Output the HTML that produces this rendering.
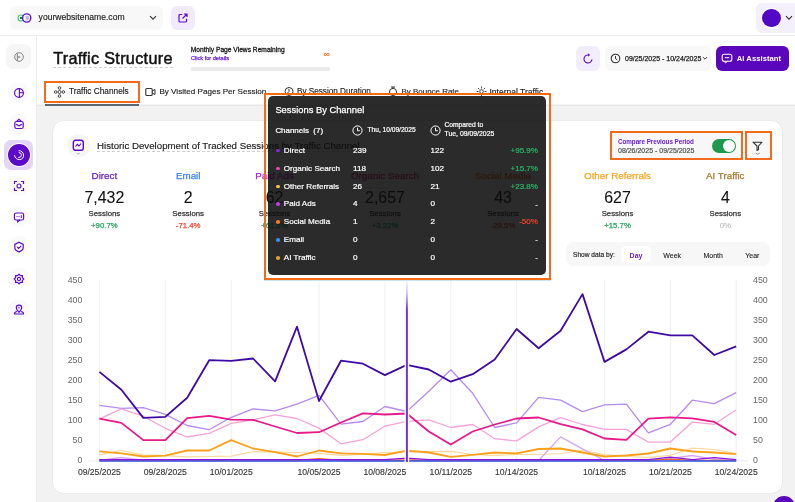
<!DOCTYPE html>
<html><head><meta charset="utf-8">
<style>
*{box-sizing:border-box;margin:0;padding:0}
html,body{width:795px;height:502px;overflow:hidden;background:#fff;font-family:"Liberation Sans",sans-serif;color:#111}
.a{position:absolute}
.nw{white-space:nowrap}
</style></head><body><div id="root" style="position:absolute;left:0;top:0;width:795px;height:502px;overflow:hidden;will-change:transform">
<div class="a" style="left:0;top:0;width:795px;height:36px;background:#fff;border-bottom:1px solid #ececec"></div>
<div class="a" style="left:10px;top:6px;width:153px;height:24px;border-radius:6px;background:#f8f8f8"></div>
<svg class="a" style="left:12px;top:8px" width="30" height="20" viewBox="12 8 30 20">
<circle cx="21" cy="18" r="3" fill="#fff" stroke="#3cc47a" stroke-width="1.1"/>
<circle cx="21" cy="18" r="1.2" fill="#0b8a3c"/>
<circle cx="26.7" cy="18" r="4.1" fill="#fff" stroke="#5f12c8" stroke-width="1.4"/>
<path d="M25.8 15.6 H26.8 A2.4 2.4 0 0 1 26.8 20.4 H25.8Z" fill="#c9b0f0"/>
</svg>
<div class="a nw" style="left:38.6px;top:12.7px;font-size:8.6px;line-height:8.6px;color:#222;font-weight:400;;-webkit-text-stroke:0.15px #222">yourwebsitename.com</div>
<svg class="a" style="left:149px;top:15px" width="8" height="6" viewBox="0 0 8 6"><path d="M1 1.2 L4 4.2 L7 1.2" fill="none" stroke="#333" stroke-width="1.1"/></svg>
<div class="a" style="left:171px;top:6px;width:24px;height:24px;border-radius:6px;background:#f1eafc"></div>
<svg class="a" style="left:178px;top:13px" width="10" height="10" viewBox="0 0 10 10"><path d="M4.2 1.5 H2 A1 1 0 0 0 1 2.5 V8 A1 1 0 0 0 2 9 H7.5 A1 1 0 0 0 8.5 8 V5.8" fill="none" stroke="#5b0bc9" stroke-width="1.2"/><path d="M4.5 5.5 L9 1 M6 1 H9 V4" fill="none" stroke="#5b0bc9" stroke-width="1.2"/></svg>
<div class="a" style="left:756px;top:3px;width:39px;height:30px;border-radius:6px 0 0 6px;background:#f3effb"></div>
<div class="a" style="left:762px;top:8.7px;width:18.6px;height:18.6px;border-radius:50%;background:#5208c4;box-shadow:0 0 0 1.3px #fff"></div>
<svg class="a" style="left:785px;top:15px" width="8" height="6" viewBox="0 0 8 6"><path d="M1 1.2 L4 4.2 L7 1.2" fill="none" stroke="#333" stroke-width="1.1"/></svg>
<div class="a" style="left:0;top:36px;width:37px;height:466px;background:#fff;border-right:1px solid #ececec"></div>
<div class="a" style="left:6px;top:44.1px;width:25px;height:25px;border-radius:7px;background:#f6f6f6"></div>
<div class="a" style="left:8px;top:82.0px;width:21px;height:21px;border-radius:50%;background:#fafafa"></div>
<div class="a" style="left:8px;top:113.7px;width:21px;height:21px;border-radius:50%;background:#fafafa"></div>
<div class="a" style="left:4px;top:140.2px;width:29px;height:29.8px;border-radius:7px;background:#e3d5f8"></div>
<div class="a" style="left:7.8px;top:144.1px;width:22px;height:22px;border-radius:50%;background:#5b0bc9;box-shadow:0 0 0 1px #fff"></div>
<div class="a" style="left:8px;top:175.0px;width:21px;height:21px;border-radius:50%;background:#fafafa"></div>
<div class="a" style="left:8px;top:206.2px;width:21px;height:21px;border-radius:50%;background:#fafafa"></div>
<div class="a" style="left:8px;top:236.1px;width:21px;height:21px;border-radius:50%;background:#fafafa"></div>
<div class="a" style="left:8px;top:268.3px;width:21px;height:21px;border-radius:50%;background:#fafafa"></div>
<div class="a" style="left:8px;top:299.4px;width:21px;height:21px;border-radius:50%;background:#fafafa"></div>
<svg class="a" style="left:10.7px;top:48.6px" width="16" height="16" viewBox="-8 -8 16 16"><circle cx="0" cy="0" r="4.3" fill="none" stroke="#777" stroke-width="0.9"/><path d="M-1.6 -3.6 V3.6" stroke="#777" stroke-width="0.9"/><path d="M-0.6 -1.3 L1.6 0 L-0.6 1.3Z" fill="#777"/></svg>
<svg class="a" style="left:10.7px;top:84.5px" width="16" height="16" viewBox="-8 -8 16 16"><circle cx="0" cy="0" r="4.4" fill="none" stroke="#5b0bc9" stroke-width="1.15"/><path d="M0.4 -4.4 V4.4 M0.4 -0.2 H4.4" stroke="#5b0bc9" stroke-width="1.1"/></svg>
<svg class="a" style="left:10.7px;top:116.2px" width="16" height="16" viewBox="-8 -8 16 16"><rect x="-4.2" y="-2.5" width="8.4" height="7" rx="1.8" fill="none" stroke="#5b0bc9" stroke-width="1.2"/><path d="M-2.4 -2.5 L0 -4.6 L2.4 -2.5 M-3 0.3 L0 1.8 L3 0.3" fill="none" stroke="#5b0bc9" stroke-width="1.2"/></svg>
<svg class="a" style="left:10.7px;top:147.1px" width="16" height="16" viewBox="-8 -8 16 16"><path d="M-4.4 0.6 A4.5 4.5 0 1 0 0 -4.4" fill="none" stroke="#fff" stroke-width="1" stroke-linecap="round"/><path d="M-0.3 2.5 A2.4 2.4 0 0 0 0.2 -2.5" fill="none" stroke="#fff" stroke-width="1" stroke-linecap="round"/></svg>
<svg class="a" style="left:10.7px;top:177.5px" width="16" height="16" viewBox="-8 -8 16 16"><path d="M-4.5 -2 V-4.5 H-2 M2 -4.5 H4.5 V-2 M4.5 2 V4.5 H2 M-2 4.5 H-4.5 V2" fill="none" stroke="#5b0bc9" stroke-width="1.2"/><circle cx="0" cy="0" r="2" fill="none" stroke="#5b0bc9" stroke-width="1.1"/></svg>
<svg class="a" style="left:10.7px;top:208.7px" width="16" height="16" viewBox="-8 -8 16 16"><rect x="-4.6" y="-4" width="9.2" height="7" rx="1.8" fill="none" stroke="#5b0bc9" stroke-width="1.2"/><path d="M-1.5 3 L-1.2 5 L1 3" fill="none" stroke="#5b0bc9" stroke-width="1.1"/><circle cx="-2" cy="-0.5" r="0.6" fill="#5b0bc9"/><circle cx="0" cy="-0.5" r="0.6" fill="#5b0bc9"/><path d="M2.3 -1.8 V1" stroke="#5b0bc9" stroke-width="1"/></svg>
<svg class="a" style="left:10.7px;top:238.6px" width="16" height="16" viewBox="-8 -8 16 16"><path d="M0 -4.8 L4.2 -2.6 V0.8 C4.2 2.8 2 4.2 0 4.9 C-2 4.2 -4.2 2.8 -4.2 0.8 V-2.6Z" fill="none" stroke="#5b0bc9" stroke-width="1.2"/><path d="M-1.8 0 L-0.3 1.4 L2 -1.2" fill="none" stroke="#5b0bc9" stroke-width="1.1"/></svg>
<svg class="a" style="left:10.7px;top:270.8px" width="16" height="16" viewBox="-8 -8 16 16"><path d="M0 -4.8 L1.4 -3.4 L3.4 -3.4 L3.4 -1.4 L4.8 0 L3.4 1.4 L3.4 3.4 L1.4 3.4 L0 4.8 L-1.4 3.4 L-3.4 3.4 L-3.4 1.4 L-4.8 0 L-3.4 -1.4 L-3.4 -3.4 L-1.4 -3.4Z" fill="none" stroke="#5b0bc9" stroke-width="1.2" stroke-linejoin="round"/><circle r="1.6" fill="none" stroke="#5b0bc9" stroke-width="1.1"/></svg>
<svg class="a" style="left:10.7px;top:301.9px" width="16" height="16" viewBox="-8 -8 16 16"><path d="M0 2.2 C-1.8 0.5 -2.7 -0.8 -2.7 -2.2 A2.7 2.7 0 0 1 2.7 -2.2 C2.7 -0.8 1.8 0.5 0 2.2Z" fill="none" stroke="#5b0bc9" stroke-width="1.2"/><circle cx="0" cy="-2.3" r="0.8" fill="#5b0bc9"/><path d="M-2 1.5 C-4 2 -4.8 2.8 -4.5 4 H4.5 C4.8 2.8 4 2 2 1.5" fill="none" stroke="#5b0bc9" stroke-width="1.1"/></svg>
<div class="a" style="left:37px;top:36px;width:758px;height:68px;background:#fff"></div>
<div class="a nw" style="left:53.2px;top:49.7px;font-size:16.2px;line-height:16.2px;color:#111;font-weight:400;letter-spacing:0.31px;-webkit-text-stroke:0.5px #111">Traffic Structure</div>
<div class="a" style="left:53px;top:67px;width:120px;height:0;border-top:1px dashed #cfcfcf"></div>
<div class="a nw" style="left:190.8px;top:46.7px;font-size:6.67px;line-height:6.67px;color:#222;font-weight:400;;-webkit-text-stroke:0.3px #222">Monthly Page Views Remaining</div>
<div class="a nw" style="left:191.0px;top:56.3px;font-size:5.6px;line-height:5.6px;color:#6a1fd0;font-weight:400;;-webkit-text-stroke:0.25px #6a1fd0">Click for details</div>
<div class="a nw" style="left:323.5px;top:49.9px;font-size:9px;line-height:9px;color:#f06a1a;font-weight:700;">∞</div>
<div class="a" style="left:191px;top:66.7px;width:139px;height:4px;background:#ebebeb;border-radius:1px"></div>
<div class="a" style="left:576.3px;top:46px;width:23.7px;height:24.5px;border-radius:6px;background:#f2edfc"></div>
<svg class="a" style="left:580.3px;top:50.6px" width="16" height="16" viewBox="-8 -8 16 16"><path d="M0.6 -4 A4 4 0 1 0 3.9 0.9" fill="none" stroke="#5b0bc9" stroke-width="1.15" stroke-linecap="round"/><path d="M0.1 -5.7 L2.1 -4 L0.1 -2.3Z" fill="#5b0bc9"/></svg>
<div class="a" style="left:605px;top:46px;width:106.3px;height:24.5px;border-radius:6px;background:#f8f8f8"></div>
<svg class="a" style="left:610px;top:53px" width="11" height="11" viewBox="0 0 11 11"><circle cx="5.5" cy="5.5" r="4.3" fill="none" stroke="#333" stroke-width="1.1"/><path d="M5.5 3 V5.7 L7.2 6.8" fill="none" stroke="#333" stroke-width="1"/></svg>
<div class="a nw" style="left:625.0px;top:55.3px;font-size:7.0px;line-height:7.0px;color:#222;font-weight:400;;-webkit-text-stroke:0.25px #222">09/25/2025 - 10/24/2025</div>
<svg class="a" style="left:702px;top:56px" width="6" height="5" viewBox="0 0 6 5"><path d="M0.8 1 L3 3.2 L5.2 1" fill="none" stroke="#333" stroke-width="0.9"/></svg>
<div class="a" style="left:715.8px;top:46px;width:73.2px;height:24.5px;border-radius:6px;background:#5a06bd"></div>
<svg class="a" style="left:721px;top:53px" width="12" height="11" viewBox="0 0 12 11"><rect x="1.2" y="1.2" width="9.6" height="7" rx="2" fill="none" stroke="#fff" stroke-width="1.1"/><path d="M3.5 8.2 L4.5 10 L6.5 8.2" fill="none" stroke="#fff" stroke-width="1"/><path d="M3.8 4.7 H8.2" stroke="#fff" stroke-width="1"/></svg>
<div class="a nw" style="left:736.8px;top:55.0px;font-size:7.73px;line-height:7.73px;color:#fff;font-weight:700;">AI Assistant</div>
<div class="a" style="left:43.5px;top:80.5px;width:96px;height:22.5px;border:2.4px solid #f26b1d;background:#fff"></div>
<svg class="a" style="left:54px;top:86px" width="11" height="12" viewBox="0 0 11 12"><circle cx="5.5" cy="2" r="1.3" fill="none" stroke="#333" stroke-width="0.9"/><circle cx="5.5" cy="10" r="1.3" fill="none" stroke="#333" stroke-width="0.9"/><circle cx="1.7" cy="6" r="1.3" fill="none" stroke="#333" stroke-width="0.9"/><circle cx="9.3" cy="6" r="1.3" fill="none" stroke="#333" stroke-width="0.9"/><circle cx="5.5" cy="6" r="1.5" fill="none" stroke="#333" stroke-width="0.9"/></svg>
<div class="a nw" style="left:69.0px;top:88.0px;font-size:8.28px;line-height:8.28px;color:#222;font-weight:400;;-webkit-text-stroke:0.15px #222">Traffic Channels</div>
<svg class="a" style="left:145px;top:86.5px" width="11" height="10" viewBox="0 0 11 10"><rect x="0.8" y="1.5" width="6.4" height="7" rx="1" fill="none" stroke="#333" stroke-width="1.1"/><path d="M7.2 4 L10 2.5 V7.5 L7.2 6" fill="none" stroke="#333" stroke-width="1"/></svg>
<div class="a nw" style="left:159.4px;top:88.1px;font-size:8.11px;line-height:8.11px;color:#222;font-weight:400;;-webkit-text-stroke:0.15px #222">By Visited Pages Per Session</div>
<svg class="a" style="left:283.5px;top:86px" width="10" height="11" viewBox="0 0 10 11"><circle cx="5" cy="5.5" r="4" fill="none" stroke="#333" stroke-width="1"/><path d="M5 3 V5.5 L3.5 7" fill="none" stroke="#333" stroke-width="1"/></svg>
<div class="a nw" style="left:297.0px;top:88.1px;font-size:8.17px;line-height:8.17px;color:#222;font-weight:400;;-webkit-text-stroke:0.15px #222">By Session Duration</div>
<svg class="a" style="left:387.5px;top:86px" width="10" height="11" viewBox="0 0 10 11"><circle cx="5" cy="6" r="3.6" fill="none" stroke="#333" stroke-width="1"/><path d="M3 1 H7 M5 1 V2.5" fill="none" stroke="#333" stroke-width="1"/></svg>
<div class="a nw" style="left:401.5px;top:88.3px;font-size:7.96px;line-height:7.96px;color:#222;font-weight:400;;-webkit-text-stroke:0.15px #222">By Bounce Rate</div>
<svg class="a" style="left:476px;top:86px" width="11" height="11" viewBox="0 0 11 11"><circle cx="5.5" cy="5.5" r="1.8" fill="none" stroke="#333" stroke-width="0.9"/><path d="M5.5 0.5 V2.5 M5.5 8.5 V10.5 M0.5 5.5 H2.5 M8.5 5.5 H10.5 M2 2 L3.3 3.3 M7.7 7.7 L9 9 M9 2 L7.7 3.3 M3.3 7.7 L2 9" stroke="#333" stroke-width="0.9"/></svg>
<div class="a nw" style="left:489.5px;top:87.8px;font-size:8.51px;line-height:8.51px;color:#222;font-weight:400;;-webkit-text-stroke:0.15px #222">Internal Traffic</div>
<div class="a" style="left:37px;top:104px;width:758px;height:398px;background:#f2f2f2"></div>
<div class="a" style="left:37px;top:105px;width:758px;height:1px;background:#e8e8e8"></div>
<div class="a" style="left:45px;top:104px;width:94px;height:1.5px;background:#5d6770"></div>
<div class="a" style="left:53px;top:121px;width:729px;height:371.5px;background:#fff;border-radius:10px;box-shadow:0 0 0 0.6px #e4e4e4"></div>
<div class="a" style="left:773px;top:496px;width:22px;height:22px;border-radius:50%;background:#5a06bd"></div>
<div class="a" style="left:66.5px;top:133.7px;width:23.5px;height:23.5px;border-radius:50%;background:#f6f6f6"></div>
<svg class="a" style="left:72px;top:139px" width="13" height="17" viewBox="0 0 13 17"><rect x="1.3" y="1.3" width="10" height="10" rx="2.2" fill="none" stroke="#5b0bc9" stroke-width="1.4"/><path d="M3.5 7.5 L5.3 5.3 L7 7 L9 4.5" fill="none" stroke="#5b0bc9" stroke-width="1.1"/><path d="M4.8 14 L6.3 15.2 L7.8 14" fill="none" stroke="#999" stroke-width="0.8"/></svg>
<div class="a nw" style="left:97.0px;top:140.8px;font-size:9.7px;line-height:9.7px;color:#222;font-weight:400;;-webkit-text-stroke:0.15px #222">Historic Development of Tracked Sessions by Traffic Channel</div>
<div class="a" style="left:97px;top:151px;width:263px;height:0;border-top:1px dashed #cfcfcf"></div>
<div class="a" style="left:609.8px;top:131.2px;width:133px;height:29.3px;border:2.3px solid #f26b1d;background:#f7f7f7"></div>
<div class="a nw" style="left:618.0px;top:138.6px;font-size:6.3px;line-height:6.3px;color:#6a1fd0;font-weight:700;letter-spacing:-0.05px">Compare Previous Period</div>
<div class="a nw" style="left:618.0px;top:147.0px;font-size:7.0px;line-height:7.0px;color:#555;font-weight:400;;-webkit-text-stroke:0.2px #555">08/26/2025 - 09/25/2025</div>
<div class="a" style="left:711.9px;top:138.6px;width:24.6px;height:14.7px;border-radius:8px;background:#1a9a4a"></div>
<div class="a" style="left:723.2px;top:140.1px;width:11.8px;height:11.8px;border-radius:50%;background:#fff"></div>
<div class="a" style="left:744.5px;top:131.3px;width:27.5px;height:29px;border:2.3px solid #f26b1d;background:#f7f7f7"></div>
<svg class="a" style="left:752px;top:141px" width="12" height="15" viewBox="0 0 12 15"><path d="M1 1.2 H10 L6.5 5 V8.5 L5 9.5 V5Z" fill="none" stroke="#333" stroke-width="1.1" stroke-linejoin="round"/><path d="M3.8 12 L5.8 13.4 L7.8 12" fill="none" stroke="#777" stroke-width="0.8"/></svg>
<div class="a nw" style="left:-45.6px;width:300px;text-align:center;top:171.2px;font-size:9.8px;line-height:9.8px;color:#6a1fd0;font-weight:400;;-webkit-text-stroke:0.25px #6a1fd0">Direct</div>
<div class="a nw" style="left:-45.6px;width:300px;text-align:center;top:190.3px;font-size:15.9px;line-height:15.9px;color:#111;font-weight:400;;-webkit-text-stroke:0.1px #111">7,432</div>
<div class="a nw" style="left:-45.6px;width:300px;text-align:center;top:209.7px;font-size:7.8px;line-height:7.8px;color:#333;font-weight:400;;-webkit-text-stroke:0.25px #333">Sessions</div>
<div class="a nw" style="left:-45.6px;width:300px;text-align:center;top:222.4px;font-size:7.8px;line-height:7.8px;color:#27a35e;font-weight:400;;-webkit-text-stroke:0.25px #27a35e">+90.7%</div>
<div class="a nw" style="left:38.2px;width:300px;text-align:center;top:171.2px;font-size:9.8px;line-height:9.8px;color:#3b82f6;font-weight:400;;-webkit-text-stroke:0.25px #3b82f6">Email</div>
<div class="a nw" style="left:38.2px;width:300px;text-align:center;top:190.3px;font-size:15.9px;line-height:15.9px;color:#111;font-weight:400;;-webkit-text-stroke:0.1px #111">2</div>
<div class="a nw" style="left:38.2px;width:300px;text-align:center;top:209.7px;font-size:7.8px;line-height:7.8px;color:#333;font-weight:400;;-webkit-text-stroke:0.25px #333">Sessions</div>
<div class="a nw" style="left:38.2px;width:300px;text-align:center;top:222.4px;font-size:7.8px;line-height:7.8px;color:#e5482d;font-weight:400;;-webkit-text-stroke:0.25px #e5482d">-71.4%</div>
<div class="a nw" style="left:124.5px;width:300px;text-align:center;top:171.2px;font-size:9.8px;line-height:9.8px;color:#b21fe0;font-weight:400;;-webkit-text-stroke:0.25px #b21fe0">Paid Ads</div>
<div class="a nw" style="left:124.5px;width:300px;text-align:center;top:190.3px;font-size:15.9px;line-height:15.9px;color:#111;font-weight:400;;-webkit-text-stroke:0.1px #111">62</div>
<div class="a nw" style="left:124.5px;width:300px;text-align:center;top:209.7px;font-size:7.8px;line-height:7.8px;color:#333;font-weight:400;;-webkit-text-stroke:0.25px #333">Sessions</div>
<div class="a nw" style="left:124.5px;width:300px;text-align:center;top:222.4px;font-size:7.8px;line-height:7.8px;color:#27a35e;font-weight:400;;-webkit-text-stroke:0.25px #27a35e">+61.5%</div>
<div class="a nw" style="left:235.0px;width:300px;text-align:center;top:171.2px;font-size:9.8px;line-height:9.8px;color:#e0237f;font-weight:400;;-webkit-text-stroke:0.25px #e0237f">Organic Search</div>
<div class="a nw" style="left:235.0px;width:300px;text-align:center;top:190.3px;font-size:15.9px;line-height:15.9px;color:#111;font-weight:400;;-webkit-text-stroke:0.1px #111">2,657</div>
<div class="a nw" style="left:235.0px;width:300px;text-align:center;top:209.7px;font-size:7.8px;line-height:7.8px;color:#333;font-weight:400;;-webkit-text-stroke:0.25px #333">Sessions</div>
<div class="a nw" style="left:235.0px;width:300px;text-align:center;top:222.4px;font-size:7.8px;line-height:7.8px;color:#27a35e;font-weight:400;;-webkit-text-stroke:0.25px #27a35e">+3.22%</div>
<div class="a nw" style="left:353.0px;width:300px;text-align:center;top:171.2px;font-size:9.8px;line-height:9.8px;color:#f06a2a;font-weight:400;;-webkit-text-stroke:0.25px #f06a2a">Social Media</div>
<div class="a nw" style="left:353.0px;width:300px;text-align:center;top:190.3px;font-size:15.9px;line-height:15.9px;color:#111;font-weight:400;;-webkit-text-stroke:0.1px #111">43</div>
<div class="a nw" style="left:353.0px;width:300px;text-align:center;top:209.7px;font-size:7.8px;line-height:7.8px;color:#333;font-weight:400;;-webkit-text-stroke:0.25px #333">Sessions</div>
<div class="a nw" style="left:353.0px;width:300px;text-align:center;top:222.4px;font-size:7.8px;line-height:7.8px;color:#e5482d;font-weight:400;;-webkit-text-stroke:0.25px #e5482d">-29.5%</div>
<div class="a nw" style="left:467.5px;width:300px;text-align:center;top:171.2px;font-size:9.8px;line-height:9.8px;color:#f5a623;font-weight:400;;-webkit-text-stroke:0.25px #f5a623">Other Referrals</div>
<div class="a nw" style="left:467.5px;width:300px;text-align:center;top:190.3px;font-size:15.9px;line-height:15.9px;color:#111;font-weight:400;;-webkit-text-stroke:0.1px #111">627</div>
<div class="a nw" style="left:467.5px;width:300px;text-align:center;top:209.7px;font-size:7.8px;line-height:7.8px;color:#333;font-weight:400;;-webkit-text-stroke:0.25px #333">Sessions</div>
<div class="a nw" style="left:467.5px;width:300px;text-align:center;top:222.4px;font-size:7.8px;line-height:7.8px;color:#27a35e;font-weight:400;;-webkit-text-stroke:0.25px #27a35e">+15.7%</div>
<div class="a nw" style="left:575.3px;width:300px;text-align:center;top:171.2px;font-size:9.8px;line-height:9.8px;color:#a8782a;font-weight:400;;-webkit-text-stroke:0.25px #a8782a">AI Traffic</div>
<div class="a nw" style="left:575.3px;width:300px;text-align:center;top:190.3px;font-size:15.9px;line-height:15.9px;color:#111;font-weight:400;;-webkit-text-stroke:0.1px #111">4</div>
<div class="a nw" style="left:575.3px;width:300px;text-align:center;top:209.7px;font-size:7.8px;line-height:7.8px;color:#333;font-weight:400;;-webkit-text-stroke:0.25px #333">Sessions</div>
<div class="a nw" style="left:575.3px;width:300px;text-align:center;top:222.4px;font-size:7.8px;line-height:7.8px;color:#c8c8c8;font-weight:400;;-webkit-text-stroke:0.25px #c8c8c8">0%</div>
<div class="a" style="left:566px;top:242.2px;width:203.6px;height:24px;border-radius:7px;background:#f7f7f7"></div>
<div class="a" style="left:621px;top:246px;width:29.5px;height:17.3px;border-radius:5px;background:#fff"></div>
<div class="a nw" style="left:573.0px;top:251.6px;font-size:6.6px;line-height:6.6px;color:#222;font-weight:400;;-webkit-text-stroke:0.15px #222">Show data by:</div>
<div class="a nw" style="left:486.0px;width:300px;text-align:center;top:251.5px;font-size:7px;line-height:7px;color:#6a1fd0;font-weight:700;">Day</div>
<div class="a nw" style="left:522.2px;width:300px;text-align:center;top:251.5px;font-size:7px;line-height:7px;color:#222;font-weight:400;;-webkit-text-stroke:0.1px #222">Week</div>
<div class="a nw" style="left:563.2px;width:300px;text-align:center;top:251.5px;font-size:7px;line-height:7px;color:#222;font-weight:400;;-webkit-text-stroke:0.1px #222">Month</div>
<div class="a nw" style="left:602.3px;width:300px;text-align:center;top:251.5px;font-size:7px;line-height:7px;color:#222;font-weight:400;;-webkit-text-stroke:0.1px #222">Year</div>
<svg class="a" style="left:0;top:0" width="795" height="502" viewBox="0 0 795 502">
<line x1="99.4" y1="280" x2="99.4" y2="461" stroke="#ececec" stroke-width="0.8"/>
<line x1="165.3" y1="280" x2="165.3" y2="461" stroke="#ececec" stroke-width="0.8"/>
<line x1="231.2" y1="280" x2="231.2" y2="461" stroke="#ececec" stroke-width="0.8"/>
<line x1="319.0" y1="280" x2="319.0" y2="461" stroke="#ececec" stroke-width="0.8"/>
<line x1="384.9" y1="280" x2="384.9" y2="461" stroke="#ececec" stroke-width="0.8"/>
<line x1="450.8" y1="280" x2="450.8" y2="461" stroke="#ececec" stroke-width="0.8"/>
<line x1="516.6" y1="280" x2="516.6" y2="461" stroke="#ececec" stroke-width="0.8"/>
<line x1="604.5" y1="280" x2="604.5" y2="461" stroke="#ececec" stroke-width="0.8"/>
<line x1="670.4" y1="280" x2="670.4" y2="461" stroke="#ececec" stroke-width="0.8"/>
<line x1="736.2" y1="280" x2="736.2" y2="461" stroke="#ececec" stroke-width="0.8"/>
<line x1="88" y1="460.8" x2="748" y2="460.8" stroke="#e6e6e6" stroke-width="0.8"/>
<polyline points="99.4,405.3 121.4,408.3 143.3,407.7 165.3,414.3 187.2,425.5 209.2,429.7 231.2,417.3 253.1,408.9 275.1,410.9 297.0,404.1 319.0,395.3 341.0,424.1 362.9,421.5 384.9,406.5 406.8,411.5 428.8,391.3 450.8,369.8 472.7,393.3 494.7,427.5 516.6,422.9 538.6,397.3 560.6,400.2 582.5,411.7 604.5,404.9 626.4,404.2 648.4,432.9 670.4,424.3 692.3,400.2 714.3,403.7 736.2,392.7" fill="none" stroke="#b48cf0" stroke-width="1.3" stroke-linejoin="round"/>
<polyline points="99.4,418.9 121.4,408.9 143.3,416.2 165.3,428.3 187.2,437.0 209.2,433.3 231.2,423.3 253.1,419.9 275.1,414.9 297.0,418.5 319.0,428.1 341.0,443.8 362.9,439.7 384.9,426.2 406.8,421.3 428.8,419.9 450.8,427.5 472.7,424.5 494.7,438.7 516.6,440.9 538.6,426.9 560.6,417.7 582.5,424.5 604.5,429.4 626.4,429.4 648.4,442.1 670.4,442.1 692.3,422.1 714.3,424.3 736.2,409.8" fill="none" stroke="#f7a3d6" stroke-width="1.3" stroke-linejoin="round"/>
<polyline points="99.4,454.9 121.4,450.5 143.3,454.9 165.3,455.7 187.2,456.9 209.2,456.5 231.2,456.1 253.1,451.7 275.1,452.1 297.0,452.5 319.0,453.4 341.0,455.4 362.9,454.5 384.9,452.5 406.8,452.1 428.8,451.7 450.8,451.4 472.7,454.5 494.7,455.4 516.6,454.5 538.6,454.5 560.6,453.5 582.5,450.5 604.5,454.5 626.4,456.5 648.4,457.3 670.4,455.3 692.3,448.1 714.3,449.5 736.2,453.5" fill="none" stroke="#fcd79c" stroke-width="1.2" stroke-linejoin="round"/>
<polyline points="99.4,460.5 121.4,457.5 143.3,460.5 165.3,460.5 187.2,460.5 209.2,460.5 231.2,460.5 253.1,460.5 275.1,460.5 297.0,460.5 319.0,460.5 341.0,460.5 362.9,460.5 384.9,460.5 406.8,460.5 428.8,460.5 450.8,460.5 472.7,460.5 494.7,460.5 516.6,460.5 538.6,460.5 560.6,436.9 582.5,448.9 604.5,460.5 626.4,460.5 648.4,460.5 670.4,458.5 692.3,455.5 714.3,459.3 736.2,460.5" fill="none" stroke="#d6a6f5" stroke-width="1.3" stroke-linejoin="round"/>
<polyline points="99.4,460.5 121.4,460.5 143.3,460.5 165.3,460.5 187.2,460.5 209.2,460.5 231.2,460.5 253.1,460.5 275.1,460.5 297.0,460.5 319.0,458.9 341.0,460.5 362.9,460.5 384.9,460.5 406.8,460.1 428.8,460.5 450.8,460.5 472.7,460.5 494.7,460.5 516.6,460.5 538.6,460.5 560.6,460.5 582.5,460.5 604.5,460.5 626.4,460.5 648.4,460.5 670.4,459.3 692.3,460.5 714.3,460.5 736.2,460.5" fill="none" stroke="#f0662a" stroke-width="1.6" stroke-linejoin="round"/>
<polyline points="99.4,461.0 121.4,461.0 143.3,461.0 165.3,461.0 187.2,461.0 209.2,461.0 231.2,461.0 253.1,461.0 275.1,461.0 297.0,461.0 319.0,461.0 341.0,461.0 362.9,461.0 384.9,461.0 406.8,461.0 428.8,461.0 450.8,461.0 472.7,461.0 494.7,461.0 516.6,461.0 538.6,461.0 560.6,461.0 582.5,461.0 604.5,461.0 626.4,461.0 648.4,461.0 670.4,461.0 692.3,461.0 714.3,461.0 736.2,461.0" fill="none" stroke="#2b5cf0" stroke-width="1.6" stroke-linejoin="round"/>
<polyline points="99.4,459.7 121.4,459.7 143.3,459.7 165.3,459.7 187.2,459.7 209.2,459.7 231.2,459.7 253.1,459.7 275.1,459.7 297.0,459.7 319.0,459.7 341.0,459.7 362.9,459.7 384.9,459.7 406.8,458.1 428.8,459.7 450.8,459.7 472.7,459.7 494.7,459.7 516.6,459.7 538.6,459.7 560.6,459.7 582.5,459.7 604.5,459.7 626.4,459.7 648.4,459.7 670.4,457.1 692.3,459.7 714.3,457.7 736.2,459.7" fill="none" stroke="#8a16e0" stroke-width="1.2" stroke-linejoin="round"/>
<polyline points="99.4,418.6 121.4,422.9 143.3,440.1 165.3,440.1 187.2,418.2 209.2,415.8 231.2,419.7 253.1,419.9 275.1,426.5 297.0,433.0 319.0,432.2 341.0,422.5 362.9,413.4 384.9,414.5 406.8,413.5 428.8,431.5 450.8,444.5 472.7,431.5 494.7,424.5 516.6,418.5 538.6,417.5 560.6,424.1 582.5,429.4 604.5,438.5 626.4,439.8 648.4,418.7 670.4,417.3 692.3,418.3 714.3,421.9 736.2,434.9" fill="none" stroke="#e8198b" stroke-width="1.8" stroke-linejoin="round"/>
<polyline points="99.4,451.4 121.4,453.4 143.3,456.5 165.3,455.7 187.2,450.5 209.2,450.5 231.2,440.1 253.1,448.5 275.1,452.1 297.0,456.5 319.0,450.5 341.0,453.4 362.9,453.8 384.9,455.0 406.8,450.7 428.8,452.5 450.8,456.9 472.7,454.9 494.7,452.5 516.6,453.4 538.6,449.0 560.6,448.5 582.5,452.5 604.5,456.5 626.4,455.5 648.4,453.5 670.4,448.5 692.3,451.5 714.3,452.5 736.2,454.1" fill="none" stroke="#f9a11b" stroke-width="1.8" stroke-linejoin="round"/>
<polyline points="99.4,371.9 121.4,389.8 143.3,417.9 165.3,416.9 187.2,397.8 209.2,360.2 231.2,360.9 253.1,358.5 275.1,381.3 297.0,326.7 319.0,401.0 341.0,360.7 362.9,363.7 384.9,375.1 406.8,364.9 428.8,369.5 450.8,381.7 472.7,374.2 494.7,359.5 516.6,329.0 538.6,348.3 560.6,330.7 582.5,294.1 604.5,361.9 626.4,349.4 648.4,331.7 670.4,335.3 692.3,335.3 714.3,355.0 736.2,346.3" fill="none" stroke="#3f0ba6" stroke-width="1.8" stroke-linejoin="round"/>

<defs><linearGradient id="cg" x1="0" y1="0" x2="0" y2="1"><stop offset="0" stop-color="#8a4ae0" stop-opacity="0.05"/><stop offset="0.07" stop-color="#8a4ae0" stop-opacity="0.35"/><stop offset="0.16" stop-color="#7433dd" stop-opacity="1"/><stop offset="1" stop-color="#7030dc"/></linearGradient></defs>
<rect x="404.6" y="300" width="4.6" height="162" fill="#fff"/><rect x="405.9" y="281" width="2" height="181" fill="url(#cg)"/>
</svg>
<div class="a nw" style="left:-217.6px;width:300px;text-align:right;top:276.1px;font-size:8.8px;line-height:8.8px;color:#666;font-weight:400;">450</div>
<div class="a nw" style="left:753.0px;top:276.1px;font-size:8.8px;line-height:8.8px;color:#666;font-weight:400;">450</div>
<div class="a nw" style="left:-217.6px;width:300px;text-align:right;top:296.1px;font-size:8.8px;line-height:8.8px;color:#666;font-weight:400;">400</div>
<div class="a nw" style="left:753.0px;top:296.1px;font-size:8.8px;line-height:8.8px;color:#666;font-weight:400;">400</div>
<div class="a nw" style="left:-217.6px;width:300px;text-align:right;top:316.1px;font-size:8.8px;line-height:8.8px;color:#666;font-weight:400;">350</div>
<div class="a nw" style="left:753.0px;top:316.1px;font-size:8.8px;line-height:8.8px;color:#666;font-weight:400;">350</div>
<div class="a nw" style="left:-217.6px;width:300px;text-align:right;top:336.1px;font-size:8.8px;line-height:8.8px;color:#666;font-weight:400;">300</div>
<div class="a nw" style="left:753.0px;top:336.1px;font-size:8.8px;line-height:8.8px;color:#666;font-weight:400;">300</div>
<div class="a nw" style="left:-217.6px;width:300px;text-align:right;top:356.1px;font-size:8.8px;line-height:8.8px;color:#666;font-weight:400;">250</div>
<div class="a nw" style="left:753.0px;top:356.1px;font-size:8.8px;line-height:8.8px;color:#666;font-weight:400;">250</div>
<div class="a nw" style="left:-217.6px;width:300px;text-align:right;top:376.2px;font-size:8.8px;line-height:8.8px;color:#666;font-weight:400;">200</div>
<div class="a nw" style="left:753.0px;top:376.2px;font-size:8.8px;line-height:8.8px;color:#666;font-weight:400;">200</div>
<div class="a nw" style="left:-217.6px;width:300px;text-align:right;top:396.2px;font-size:8.8px;line-height:8.8px;color:#666;font-weight:400;">150</div>
<div class="a nw" style="left:753.0px;top:396.2px;font-size:8.8px;line-height:8.8px;color:#666;font-weight:400;">150</div>
<div class="a nw" style="left:-217.6px;width:300px;text-align:right;top:416.2px;font-size:8.8px;line-height:8.8px;color:#666;font-weight:400;">100</div>
<div class="a nw" style="left:753.0px;top:416.2px;font-size:8.8px;line-height:8.8px;color:#666;font-weight:400;">100</div>
<div class="a nw" style="left:-217.6px;width:300px;text-align:right;top:436.2px;font-size:8.8px;line-height:8.8px;color:#666;font-weight:400;">50</div>
<div class="a nw" style="left:753.0px;top:436.2px;font-size:8.8px;line-height:8.8px;color:#666;font-weight:400;">50</div>
<div class="a nw" style="left:-217.6px;width:300px;text-align:right;top:456.2px;font-size:8.8px;line-height:8.8px;color:#666;font-weight:400;">0</div>
<div class="a nw" style="left:753.0px;top:456.2px;font-size:8.8px;line-height:8.8px;color:#666;font-weight:400;">0</div>
<div class="a nw" style="left:-50.6px;width:300px;text-align:center;top:467.9px;font-size:8.6px;line-height:8.6px;color:#3a3a3a;font-weight:400;;-webkit-text-stroke:0.15px #3a3a3a">09/25/2025</div>
<div class="a nw" style="left:15.3px;width:300px;text-align:center;top:467.9px;font-size:8.6px;line-height:8.6px;color:#3a3a3a;font-weight:400;;-webkit-text-stroke:0.15px #3a3a3a">09/28/2025</div>
<div class="a nw" style="left:81.2px;width:300px;text-align:center;top:467.9px;font-size:8.6px;line-height:8.6px;color:#3a3a3a;font-weight:400;;-webkit-text-stroke:0.15px #3a3a3a">10/01/2025</div>
<div class="a nw" style="left:169.0px;width:300px;text-align:center;top:467.9px;font-size:8.6px;line-height:8.6px;color:#3a3a3a;font-weight:400;;-webkit-text-stroke:0.15px #3a3a3a">10/05/2025</div>
<div class="a nw" style="left:234.9px;width:300px;text-align:center;top:467.9px;font-size:8.6px;line-height:8.6px;color:#3a3a3a;font-weight:400;;-webkit-text-stroke:0.15px #3a3a3a">10/08/2025</div>
<div class="a nw" style="left:300.8px;width:300px;text-align:center;top:467.9px;font-size:8.6px;line-height:8.6px;color:#3a3a3a;font-weight:400;;-webkit-text-stroke:0.15px #3a3a3a">10/11/2025</div>
<div class="a nw" style="left:366.6px;width:300px;text-align:center;top:467.9px;font-size:8.6px;line-height:8.6px;color:#3a3a3a;font-weight:400;;-webkit-text-stroke:0.15px #3a3a3a">10/14/2025</div>
<div class="a nw" style="left:454.5px;width:300px;text-align:center;top:467.9px;font-size:8.6px;line-height:8.6px;color:#3a3a3a;font-weight:400;;-webkit-text-stroke:0.15px #3a3a3a">10/18/2025</div>
<div class="a nw" style="left:520.4px;width:300px;text-align:center;top:467.9px;font-size:8.6px;line-height:8.6px;color:#3a3a3a;font-weight:400;;-webkit-text-stroke:0.15px #3a3a3a">10/21/2025</div>
<div class="a nw" style="left:586.2px;width:300px;text-align:center;top:467.9px;font-size:8.6px;line-height:8.6px;color:#3a3a3a;font-weight:400;;-webkit-text-stroke:0.15px #3a3a3a">10/24/2025</div>
<div class="a" style="left:264px;top:93px;width:287px;height:186.5px;border:2.5px solid #f66a12"></div>
<div class="a" style="left:264px;top:279.8px;width:287px;height:1.3px;background:#c8e2f6"></div>
<div class="a" style="left:267.6px;top:96px;width:278.4px;height:178.5px;border-radius:5px;background:rgba(12,12,12,0.87)"></div>
<div class="a nw" style="left:275.4px;top:105.9px;font-size:9.36px;line-height:9.36px;color:#fff;font-weight:400;;-webkit-text-stroke:0.25px #fff">Sessions By Channel</div>
<div class="a nw" style="left:275.4px;top:126.5px;font-size:7.95px;line-height:7.95px;color:#fff;font-weight:400;;-webkit-text-stroke:0.22px #fff">Channels&nbsp; (7)</div>
<svg class="a" style="left:352px;top:124.5px" width="11" height="11" viewBox="0 0 11 11"><circle cx="5.5" cy="5.5" r="4.6" fill="none" stroke="#fff" stroke-width="1"/><path d="M5.5 2.7 V5.7 H7.8" fill="none" stroke="#fff" stroke-width="1"/></svg>
<div class="a nw" style="left:367.6px;top:126.7px;font-size:6.6px;line-height:6.6px;color:#fff;font-weight:400;;-webkit-text-stroke:0.2px #fff">Thu, 10/09/2025</div>
<svg class="a" style="left:429.6px;top:124.7px" width="11" height="11" viewBox="0 0 11 11"><circle cx="5.5" cy="5.5" r="4.6" fill="none" stroke="#fff" stroke-width="1"/><path d="M5.5 2.7 V5.7 H7.8" fill="none" stroke="#fff" stroke-width="1"/></svg>
<div class="a nw" style="left:444.5px;top:122.0px;font-size:6.7px;line-height:6.7px;color:#fff;font-weight:400;;-webkit-text-stroke:0.2px #fff">Compared to</div>
<div class="a nw" style="left:444.5px;top:131.0px;font-size:6.88px;line-height:6.88px;color:#fff;font-weight:400;;-webkit-text-stroke:0.2px #fff">Tue, 09/09/2025</div>
<div class="a" style="left:276px;top:148.9px;width:3.6px;height:3.6px;border-radius:50%;background:#7a2ee0"></div>
<div class="a nw" style="left:283.8px;top:146.8px;font-size:8.1px;line-height:8.1px;color:#fff;font-weight:400;;-webkit-text-stroke:0.2px #fff">Direct</div>
<div class="a nw" style="left:353.0px;top:146.8px;font-size:8.1px;line-height:8.1px;color:#fff;font-weight:400;;-webkit-text-stroke:0.2px #fff">239</div>
<div class="a nw" style="left:430.4px;top:146.8px;font-size:8.1px;line-height:8.1px;color:#fff;font-weight:400;;-webkit-text-stroke:0.2px #fff">122</div>
<div class="a nw" style="left:237.9px;width:300px;text-align:right;top:146.9px;font-size:8.0px;line-height:8.0px;color:#27b86a;font-weight:400;;-webkit-text-stroke:0.2px #27b86a">+95.9%</div>
<div class="a" style="left:276px;top:166.7px;width:3.6px;height:3.6px;border-radius:50%;background:#e64aa8"></div>
<div class="a nw" style="left:283.8px;top:164.7px;font-size:8.1px;line-height:8.1px;color:#fff;font-weight:400;;-webkit-text-stroke:0.2px #fff">Organic Search</div>
<div class="a nw" style="left:353.0px;top:164.7px;font-size:8.1px;line-height:8.1px;color:#fff;font-weight:400;;-webkit-text-stroke:0.2px #fff">118</div>
<div class="a nw" style="left:430.4px;top:164.7px;font-size:8.1px;line-height:8.1px;color:#fff;font-weight:400;;-webkit-text-stroke:0.2px #fff">102</div>
<div class="a nw" style="left:237.9px;width:300px;text-align:right;top:164.8px;font-size:8.0px;line-height:8.0px;color:#27b86a;font-weight:400;;-webkit-text-stroke:0.2px #27b86a">+15.7%</div>
<div class="a" style="left:276px;top:184.6px;width:3.6px;height:3.6px;border-radius:50%;background:#f5c64a"></div>
<div class="a nw" style="left:283.8px;top:182.5px;font-size:8.1px;line-height:8.1px;color:#fff;font-weight:400;;-webkit-text-stroke:0.2px #fff">Other Referrals</div>
<div class="a nw" style="left:353.0px;top:182.5px;font-size:8.1px;line-height:8.1px;color:#fff;font-weight:400;;-webkit-text-stroke:0.2px #fff">26</div>
<div class="a nw" style="left:430.4px;top:182.5px;font-size:8.1px;line-height:8.1px;color:#fff;font-weight:400;;-webkit-text-stroke:0.2px #fff">21</div>
<div class="a nw" style="left:237.9px;width:300px;text-align:right;top:182.6px;font-size:8.0px;line-height:8.0px;color:#27b86a;font-weight:400;;-webkit-text-stroke:0.2px #27b86a">+23.8%</div>
<div class="a" style="left:276px;top:202.4px;width:3.6px;height:3.6px;border-radius:50%;background:#c03ae8"></div>
<div class="a nw" style="left:283.8px;top:200.4px;font-size:8.1px;line-height:8.1px;color:#fff;font-weight:400;;-webkit-text-stroke:0.2px #fff">Paid Ads</div>
<div class="a nw" style="left:353.0px;top:200.4px;font-size:8.1px;line-height:8.1px;color:#fff;font-weight:400;;-webkit-text-stroke:0.2px #fff">4</div>
<div class="a nw" style="left:430.4px;top:200.4px;font-size:8.1px;line-height:8.1px;color:#fff;font-weight:400;;-webkit-text-stroke:0.2px #fff">0</div>
<div class="a nw" style="left:237.9px;width:300px;text-align:right;top:200.5px;font-size:8.0px;line-height:8.0px;color:#ddd;font-weight:400;;-webkit-text-stroke:0.2px #ddd">-</div>
<div class="a" style="left:276px;top:220.3px;width:3.6px;height:3.6px;border-radius:50%;background:#f07a2a"></div>
<div class="a nw" style="left:283.8px;top:218.2px;font-size:8.1px;line-height:8.1px;color:#fff;font-weight:400;;-webkit-text-stroke:0.2px #fff">Social Media</div>
<div class="a nw" style="left:353.0px;top:218.2px;font-size:8.1px;line-height:8.1px;color:#fff;font-weight:400;;-webkit-text-stroke:0.2px #fff">1</div>
<div class="a nw" style="left:430.4px;top:218.2px;font-size:8.1px;line-height:8.1px;color:#fff;font-weight:400;;-webkit-text-stroke:0.2px #fff">2</div>
<div class="a nw" style="left:237.9px;width:300px;text-align:right;top:218.3px;font-size:8.0px;line-height:8.0px;color:#f0452a;font-weight:400;;-webkit-text-stroke:0.2px #f0452a">-50%</div>
<div class="a" style="left:276px;top:238.1px;width:3.6px;height:3.6px;border-radius:50%;background:#3b8af6"></div>
<div class="a nw" style="left:283.8px;top:236.1px;font-size:8.1px;line-height:8.1px;color:#fff;font-weight:400;;-webkit-text-stroke:0.2px #fff">Email</div>
<div class="a nw" style="left:353.0px;top:236.1px;font-size:8.1px;line-height:8.1px;color:#fff;font-weight:400;;-webkit-text-stroke:0.2px #fff">0</div>
<div class="a nw" style="left:430.4px;top:236.1px;font-size:8.1px;line-height:8.1px;color:#fff;font-weight:400;;-webkit-text-stroke:0.2px #fff">0</div>
<div class="a nw" style="left:237.9px;width:300px;text-align:right;top:236.2px;font-size:8.0px;line-height:8.0px;color:#ddd;font-weight:400;;-webkit-text-stroke:0.2px #ddd">-</div>
<div class="a" style="left:276px;top:256.0px;width:3.6px;height:3.6px;border-radius:50%;background:#e0a030"></div>
<div class="a nw" style="left:283.8px;top:253.9px;font-size:8.1px;line-height:8.1px;color:#fff;font-weight:400;;-webkit-text-stroke:0.2px #fff">AI Traffic</div>
<div class="a nw" style="left:353.0px;top:253.9px;font-size:8.1px;line-height:8.1px;color:#fff;font-weight:400;;-webkit-text-stroke:0.2px #fff">0</div>
<div class="a nw" style="left:430.4px;top:253.9px;font-size:8.1px;line-height:8.1px;color:#fff;font-weight:400;;-webkit-text-stroke:0.2px #fff">0</div>
<div class="a nw" style="left:237.9px;width:300px;text-align:right;top:254.0px;font-size:8.0px;line-height:8.0px;color:#ddd;font-weight:400;;-webkit-text-stroke:0.2px #ddd">-</div>
</div></body></html>
